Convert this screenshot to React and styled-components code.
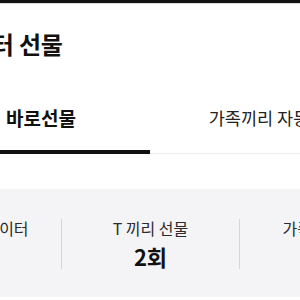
import styled, { createGlobalStyle } from "styled-components";

const GlobalStyle = createGlobalStyle`
  body {
    margin: 0;
    background: #ffffff;
    overflow: hidden;
    font-family: "Noto Sans CJK KR", "Noto Sans", sans-serif;
    color: #111111;
  }
`;

function App() {
  return (
    <>
      <GlobalStyle />
      <StatusBar />
      <Page>
        <Header>
          <Title>데이터 선물</Title>
        </Header>
        <TabBar>
          <Tab active>바로선물</Tab>
          <Tab>가족끼리 자동</Tab>
        </TabBar>
        <Summary>
          <Stat>
            <Label>데이터</Label>
          </Stat>
          <Stat divided>
            <Label>T 끼리 선물</Label>
            <Value>2회</Value>
          </Stat>
          <Stat divided>
            <Label>가족끼리 선물</Label>
            <Value>1회</Value>
          </Stat>
        </Summary>
      </Page>
    </>
  );
}

const StatusBar = styled.div`
  height: 3px;
  background: #111111;
  border-bottom: 1px solid #dcdcdc;
`;

const Page = styled.div`
  width: 436px;
  margin-left: -68px;
`;

const Header = styled.header`
  height: 78px;
  display: flex;
  align-items: center;
  padding: 0 16px;
`;

const Title = styled.h1`
  margin: 0;
  font-size: 24px;
  font-weight: 700;
  letter-spacing: -0.2px;
`;

const TabBar = styled.nav`
  display: flex;
  height: 71px;
  border-bottom: 1px solid #ececec;
`;

const Tab = styled.div`
  flex: 1;
  display: flex;
  align-items: center;
  justify-content: center;
  padding-bottom: 1px;
  font-size: ${(p) => (p.active ? "19px" : "17.5px")};
  font-weight: ${(p) => (p.active ? 700 : 400)};
  color: ${(p) => (p.active ? "#111111" : "#222222")};
  white-space: nowrap;
  overflow: hidden;
  box-shadow: ${(p) => (p.active ? "inset 0 -4px 0 #111111" : "none")};
  margin-bottom: -1px;
`;

const Summary = styled.section`
  margin-top: 35px;
  background: #f4f4f6;
  padding: 30px 20px 28px;
  display: grid;
  grid-template-columns: 109px 178px 178px;
`;

const Stat = styled.div`
  height: 50px;
  display: flex;
  flex-direction: column;
  align-items: center;
  justify-content: flex-start;
  gap: 6px;
  border-left: ${(p) => (p.divided ? "1px solid #d6d6d8" : "none")};
  white-space: nowrap;
`;

const Label = styled.span`
  font-size: 16px;
  line-height: 18px;
  color: #2a2a2a;
`;

const Value = styled.strong`
  font-size: 22px;
  line-height: 26px;
  font-weight: 700;
  color: #111111;
`;

export default App;
